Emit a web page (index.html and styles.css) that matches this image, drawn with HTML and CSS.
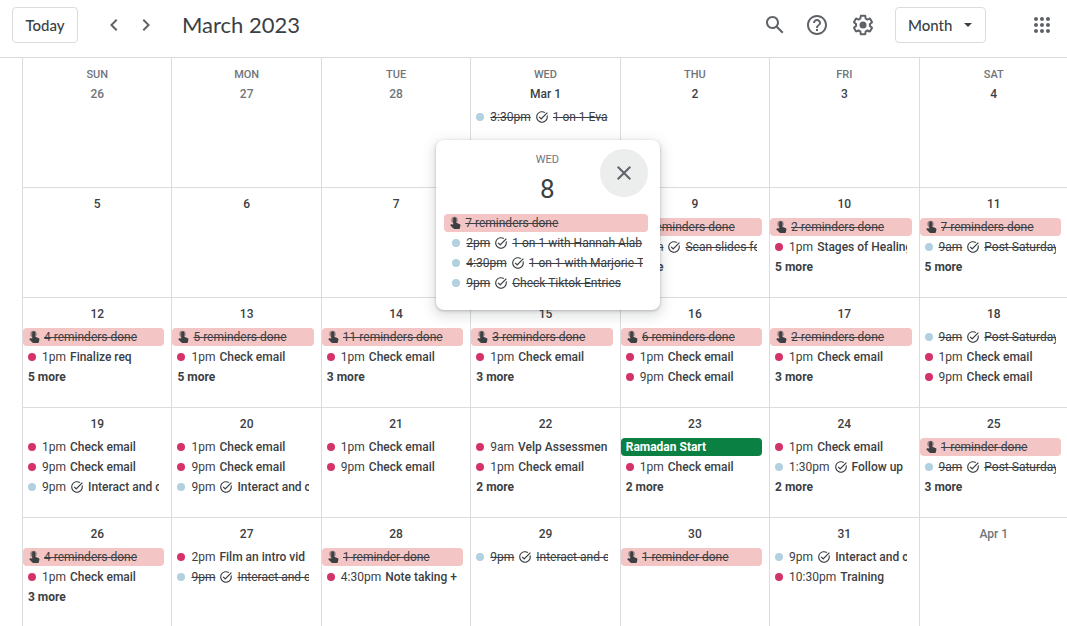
FILE: index.html
```html
<!DOCTYPE html>
<html lang="en">
<head>
    <meta charset="UTF-8">
    <meta name="viewport" content="width=device-width, initial-scale=1.0">
    <title>Calendar - March 2023</title>
    <link rel="stylesheet" href="styles.css">
</head>
<body>

    <svg class="sprite" aria-hidden="true">
        <symbol id="done" viewBox="0 0 24 24">
            <path d="M22 5.18 10.59 16.6l-4.24-4.24 1.41-1.41 2.83 2.83 10-10L22 5.18zm-2.21 5.04c.13.57.21 1.17.21 1.78 0 4.42-3.58 8-8 8s-8-3.58-8-8 3.58-8 8-8c1.58 0 3.04.46 4.28 1.25l1.44-1.44A9.9 9.9 0 0 0 12 2C6.48 2 2 6.48 2 12s4.48 10 10 10 10-4.48 10-10c0-1.19-.22-2.33-.6-3.39l-1.61 1.61z"/>
        </symbol>
        <symbol id="touch" viewBox="0 0 16 16">
            <circle cx="7.5" cy="5" r="3.2" opacity=".5"/>
            <path d="M6.2 3.8a1.5 1.5 0 0 1 3 0v4l3.2 1.1c.8.3 1.1.8 1 1.6l-.5 2.5c-.1.7-.6 1-1.2 1H7.400c-.4 0-.7-.1-1-.4L3.200 10.200l.7-.8c.2-.2.5-.3.8-.2l1.500.4z"/>
        </symbol>
    </svg>

    <header class="toolbar">
        <button class="today">Today</button>
        <button class="arrow" aria-label="Previous month">
            <svg class="icon" viewBox="0 0 24 24"><path d="M15.41 7.41 14 6l-6 6 6 6 1.41-1.41L10.83 12z"/></svg>
        </button>
        <button class="arrow next" aria-label="Next month">
            <svg class="icon" viewBox="0 0 24 24"><path d="M10 6 8.59 7.41 13.17 12l-4.58 4.59L10 18l6-6z"/></svg>
        </button>
        <h1 class="title">March 2023</h1>

        <div class="tools">
            <button class="tool" aria-label="Search">
                <svg class="icon" viewBox="0 0 24 24"><path d="M20.49 19l-5.73-5.73C15.53 12.2 16 10.91 16 9.5 16 5.91 13.09 3 9.5 3S3 5.91 3 9.5 5.91 16 9.5 16c1.41 0 2.7-.47 3.77-1.24L19 20.49 20.49 19zM5 9.5C5 7.01 7.01 5 9.5 5S14 7.01 14 9.5 11.99 14 9.5 14 5 11.99 5 9.5z"/></svg>
            </button>
            <button class="tool" aria-label="Support">
                <svg class="icon" viewBox="0 0 24 24"><path d="M11 18h2v-2h-2v2zm1-16C6.48 2 2 6.48 2 12s4.48 10 10 10 10-4.48 10-10S17.52 2 12 2zm0 18c-4.41 0-8-3.59-8-8s3.59-8 8-8 8 3.59 8 8-3.59 8-8 8zm0-14c-2.21 0-4 1.79-4 4h2c0-1.1.9-2 2-2s2 .9 2 2c0 2-3 1.75-3 5h2c0-2.25 3-2.5 3-5 0-2.21-1.79-4-4-4z"/></svg>
            </button>
            <button class="tool settings" aria-label="Settings">
                <svg class="icon" viewBox="0 0 24 24"><path d="M13.85 22.25h-3.7c-.74 0-1.36-.54-1.45-1.27l-.27-1.89c-.27-.14-.53-.29-.79-.46l-1.8.72c-.7.26-1.47-.03-1.81-.65L2.2 15.53c-.35-.66-.2-1.44.36-1.88l1.53-1.19c-.01-.15-.02-.3-.02-.46 0-.15.01-.31.02-.46l-1.52-1.19c-.59-.45-.74-1.26-.37-1.88l1.85-3.19c.34-.62 1.11-.9 1.79-.63l1.81.73c.26-.17.52-.32.78-.46l.27-1.91c.09-.7.71-1.25 1.44-1.25h3.7c.74 0 1.36.54 1.45 1.27l.27 1.89c.27.14.53.29.79.46l1.8-.72c.71-.26 1.48.03 1.82.65l1.84 3.18c.36.66.2 1.44-.36 1.88l-1.52 1.19c.01.15.02.3.02.46s-.01.31-.02.46l1.52 1.19c.56.45.72 1.23.37 1.86l-1.86 3.22c-.34.62-1.11.9-1.8.63l-1.8-.72c-.26.17-.52.32-.78.46l-.27 1.91c-.1.68-.72 1.22-1.46 1.22zm-3.23-2h2.76l.37-2.55.53-.22c.44-.18.88-.44 1.34-.78l.45-.34 2.38.96 1.38-2.4-2.03-1.58.07-.56c.03-.26.06-.51.06-.78s-.03-.53-.06-.78l-.07-.56 2.03-1.58-1.39-2.4-2.39.96-.45-.35c-.42-.32-.87-.58-1.33-.77l-.52-.22-.37-2.55h-2.76l-.37 2.55-.53.21c-.44.19-.88.44-1.34.79l-.45.33-2.38-.95-1.39 2.39 2.03 1.58-.07.56a7 7 0 0 0-.06.79c0 .26.02.53.06.78l.07.56-2.03 1.58 1.38 2.4 2.39-.96.45.35c.43.33.86.58 1.33.77l.53.22.38 2.55z"/><circle cx="12" cy="12" r="3.5"/></svg>
            </button>
            <label class="view">
                <select class="view-select" aria-label="View">
                    <option>Day</option>
                    <option>Week</option>
                    <option selected>Month</option>
                    <option>Year</option>
                </select>
                <svg class="view-arrow" viewBox="0 0 8 4"><path d="M0 0h8L4 4z"/></svg>
            </label>
            <button class="tool" aria-label="Apps">
                <svg class="icon" viewBox="0 0 24 24"><path d="M6 8c1.1 0 2-.9 2-2s-.9-2-2-2-2 .9-2 2 .9 2 2 2zm6 12c1.1 0 2-.9 2-2s-.9-2-2-2-2 .9-2 2 .9 2 2 2zm-6 0c1.1 0 2-.9 2-2s-.9-2-2-2-2 .9-2 2 .9 2 2 2zm0-6c1.1 0 2-.9 2-2s-.9-2-2-2-2 .9-2 2 .9 2 2 2zm6 0c1.1 0 2-.9 2-2s-.9-2-2-2-2 .9-2 2 .9 2 2 2zm4-8c0 1.1.9 2 2 2s2-.9 2-2-.9-2-2-2-2 .9-2 2zm-4 2c1.1 0 2-.9 2-2s-.9-2-2-2-2 .9-2 2 .9 2 2 2zm6 6c1.1 0 2-.9 2-2s-.9-2-2-2-2 .9-2 2 .9 2 2 2zm0 6c1.1 0 2-.9 2-2s-.9-2-2-2-2 .9-2 2 .9 2 2 2z"/></svg>
            </button>
        </div>
    </header>

    <main class="calendar">
        <table class="month">
            <thead>
                <tr>
                    <th>SUN</th>
                    <th>MON</th>
                    <th>TUE</th>
                    <th>WED</th>
                    <th>THU</th>
                    <th>FRI</th>
                    <th>SAT</th>
                </tr>
            </thead>
            <tbody>
                <tr class="first-week">
                    <td><div class="date other">26</div></td>
                    <td><div class="date other">27</div></td>
                    <td><div class="date other">28</div></td>
                    <td>
                        <div class="date">Mar 1</div>
                        <button class="event struck"><span class="dot blue"></span><span class="time">3:30pm</span><svg class="check"><use href="#done"/></svg><span class="name">1 on 1 Eva</span></button>
                    </td>
                    <td><div class="date">2</div></td>
                    <td><div class="date">3</div></td>
                    <td><div class="date">4</div></td>
                </tr>
                <tr>
                    <td><div class="date">5</div></td>
                    <td><div class="date">6</div></td>
                    <td><div class="date">7</div></td>
                    <td>
                        <div class="popup" role="dialog" aria-label="Wednesday, March 8">
                            <button class="close" aria-label="Close">
                                <svg class="icon" viewBox="0 0 24 24"><path d="M19 6.41 17.59 5 12 10.59 6.41 5 5 6.41 10.59 12 5 17.59 6.41 19 12 13.41 17.59 19 19 17.59 13.41 12z"/></svg>
                            </button>
                            <div class="popup-day">WED</div>
                            <div class="popup-date">8</div>
                            <button class="event reminder"><svg class="touch"><use href="#touch"/></svg><span class="name">7 reminders done</span></button>
                            <button class="event struck"><span class="dot blue"></span><span class="time">2pm</span><svg class="check"><use href="#done"/></svg><span class="name">1 on 1 with Hannah Alab</span></button>
                            <button class="event struck"><span class="dot blue"></span><span class="time">4:30pm</span><svg class="check"><use href="#done"/></svg><span class="name">1 on 1 with Marjorie T</span></button>
                            <button class="event struck"><span class="dot blue"></span><span class="time">9pm</span><svg class="check"><use href="#done"/></svg><span class="name">Check Tiktok Entries</span></button>
                        </div>
                    </td>
                    <td>
                        <div class="date">9</div>
                        <button class="event reminder"><svg class="touch"><use href="#touch"/></svg><span class="name">4 reminders done</span></button>
                        <button class="event struck"><span class="dot blue"></span><span class="time">9am</span><svg class="check"><use href="#done"/></svg><span class="name">Scan slides for</span></button>
                        <button class="event more">4 more</button>
                    </td>
                    <td>
                        <div class="date">10</div>
                        <button class="event reminder"><svg class="touch"><use href="#touch"/></svg><span class="name">2 reminders done</span></button>
                        <button class="event"><span class="dot pink"></span><span class="time">1pm</span><span class="name">Stages of Healing</span></button>
                        <button class="event more">5 more</button>
                    </td>
                    <td>
                        <div class="date">11</div>
                        <button class="event reminder"><svg class="touch"><use href="#touch"/></svg><span class="name">7 reminders done</span></button>
                        <button class="event struck"><span class="dot blue"></span><span class="time">9am</span><svg class="check"><use href="#done"/></svg><span class="name">Post Saturday</span></button>
                        <button class="event more">5 more</button>
                    </td>
                </tr>
                <tr>
                    <td>
                        <div class="date">12</div>
                        <button class="event reminder"><svg class="touch"><use href="#touch"/></svg><span class="name">4 reminders done</span></button>
                        <button class="event"><span class="dot pink"></span><span class="time">1pm</span><span class="name">Finalize req</span></button>
                        <button class="event more">5 more</button>
                    </td>
                    <td>
                        <div class="date">13</div>
                        <button class="event reminder"><svg class="touch"><use href="#touch"/></svg><span class="name">5 reminders done</span></button>
                        <button class="event"><span class="dot pink"></span><span class="time">1pm</span><span class="name">Check email</span></button>
                        <button class="event more">5 more</button>
                    </td>
                    <td>
                        <div class="date">14</div>
                        <button class="event reminder"><svg class="touch"><use href="#touch"/></svg><span class="name">11 reminders done</span></button>
                        <button class="event"><span class="dot pink"></span><span class="time">1pm</span><span class="name">Check email</span></button>
                        <button class="event more">3 more</button>
                    </td>
                    <td>
                        <div class="date">15</div>
                        <button class="event reminder"><svg class="touch"><use href="#touch"/></svg><span class="name">3 reminders done</span></button>
                        <button class="event"><span class="dot pink"></span><span class="time">1pm</span><span class="name">Check email</span></button>
                        <button class="event more">3 more</button>
                    </td>
                    <td>
                        <div class="date">16</div>
                        <button class="event reminder"><svg class="touch"><use href="#touch"/></svg><span class="name">6 reminders done</span></button>
                        <button class="event"><span class="dot pink"></span><span class="time">1pm</span><span class="name">Check email</span></button>
                        <button class="event"><span class="dot pink"></span><span class="time">9pm</span><span class="name">Check email</span></button>
                    </td>
                    <td>
                        <div class="date">17</div>
                        <button class="event reminder"><svg class="touch"><use href="#touch"/></svg><span class="name">2 reminders done</span></button>
                        <button class="event"><span class="dot pink"></span><span class="time">1pm</span><span class="name">Check email</span></button>
                        <button class="event more">3 more</button>
                    </td>
                    <td>
                        <div class="date">18</div>
                        <button class="event struck"><span class="dot blue"></span><span class="time">9am</span><svg class="check"><use href="#done"/></svg><span class="name">Post Saturday</span></button>
                        <button class="event"><span class="dot pink"></span><span class="time">1pm</span><span class="name">Check email</span></button>
                        <button class="event"><span class="dot pink"></span><span class="time">9pm</span><span class="name">Check email</span></button>
                    </td>
                </tr>
                <tr>
                    <td>
                        <div class="date">19</div>
                        <button class="event"><span class="dot pink"></span><span class="time">1pm</span><span class="name">Check email</span></button>
                        <button class="event"><span class="dot pink"></span><span class="time">9pm</span><span class="name">Check email</span></button>
                        <button class="event"><span class="dot blue"></span><span class="time">9pm</span><svg class="check"><use href="#done"/></svg><span class="name">Interact and co</span></button>
                    </td>
                    <td>
                        <div class="date">20</div>
                        <button class="event"><span class="dot pink"></span><span class="time">1pm</span><span class="name">Check email</span></button>
                        <button class="event"><span class="dot pink"></span><span class="time">9pm</span><span class="name">Check email</span></button>
                        <button class="event"><span class="dot blue"></span><span class="time">9pm</span><svg class="check"><use href="#done"/></svg><span class="name">Interact and co</span></button>
                    </td>
                    <td>
                        <div class="date">21</div>
                        <button class="event"><span class="dot pink"></span><span class="time">1pm</span><span class="name">Check email</span></button>
                        <button class="event"><span class="dot pink"></span><span class="time">9pm</span><span class="name">Check email</span></button>
                    </td>
                    <td>
                        <div class="date">22</div>
                        <button class="event"><span class="dot pink"></span><span class="time">9am</span><span class="name">Velp Assessmen</span></button>
                        <button class="event"><span class="dot pink"></span><span class="time">1pm</span><span class="name">Check email</span></button>
                        <button class="event more">2 more</button>
                    </td>
                    <td>
                        <div class="date">23</div>
                        <button class="event holiday">Ramadan Start</button>
                        <button class="event"><span class="dot pink"></span><span class="time">1pm</span><span class="name">Check email</span></button>
                        <button class="event more">2 more</button>
                    </td>
                    <td>
                        <div class="date">24</div>
                        <button class="event"><span class="dot pink"></span><span class="time">1pm</span><span class="name">Check email</span></button>
                        <button class="event"><span class="dot blue"></span><span class="time">1:30pm</span><svg class="check"><use href="#done"/></svg><span class="name">Follow up</span></button>
                        <button class="event more">2 more</button>
                    </td>
                    <td>
                        <div class="date">25</div>
                        <button class="event reminder"><svg class="touch"><use href="#touch"/></svg><span class="name">1 reminder done</span></button>
                        <button class="event struck"><span class="dot blue"></span><span class="time">9am</span><svg class="check"><use href="#done"/></svg><span class="name">Post Saturday</span></button>
                        <button class="event more">3 more</button>
                    </td>
                </tr>
                <tr class="last-week">
                    <td>
                        <div class="date">26</div>
                        <button class="event reminder"><svg class="touch"><use href="#touch"/></svg><span class="name">4 reminders done</span></button>
                        <button class="event"><span class="dot pink"></span><span class="time">1pm</span><span class="name">Check email</span></button>
                        <button class="event more">3 more</button>
                    </td>
                    <td>
                        <div class="date">27</div>
                        <button class="event"><span class="dot pink"></span><span class="time">2pm</span><span class="name">Film an intro vid</span></button>
                        <button class="event struck"><span class="dot blue"></span><span class="time">9pm</span><svg class="check"><use href="#done"/></svg><span class="name">Interact and co</span></button>
                    </td>
                    <td>
                        <div class="date">28</div>
                        <button class="event reminder"><svg class="touch"><use href="#touch"/></svg><span class="name">1 reminder done</span></button>
                        <button class="event"><span class="dot pink"></span><span class="time">4:30pm</span><span class="name">Note taking +</span></button>
                    </td>
                    <td>
                        <div class="date">29</div>
                        <button class="event struck"><span class="dot blue"></span><span class="time">9pm</span><svg class="check"><use href="#done"/></svg><span class="name">Interact and co</span></button>
                    </td>
                    <td>
                        <div class="date">30</div>
                        <button class="event reminder"><svg class="touch"><use href="#touch"/></svg><span class="name">1 reminder done</span></button>
                    </td>
                    <td>
                        <div class="date">31</div>
                        <button class="event"><span class="dot blue"></span><span class="time">9pm</span><svg class="check"><use href="#done"/></svg><span class="name">Interact and co</span></button>
                        <button class="event"><span class="dot pink"></span><span class="time">10:30pm</span><span class="name">Training</span></button>
                    </td>
                    <td><div class="date other">Apr 1</div></td>
                </tr>
            </tbody>
        </table>
    </main>

</body>
</html>
```
FILE: styles.css
```css
* {
    box-sizing: border-box;
}

body {
    margin: 0;
    font-family: Roboto, sans-serif;
    font-size: 12px;
    color: #3c4043;
    background-color: #fff;
}

button,
select {
    font-family: inherit;
    color: inherit;
    border: none;
    background: none;
    padding: 0;
    cursor: pointer;
}

.sprite {
    display: none;
}

svg {
    display: block;
    flex: none;
    fill: currentColor;
}

/* Toolbar */

.toolbar {
    display: flex;
    align-items: center;
    padding: 7px 5px 14px 12px;
}

.today,
.view-select {
    height: 36px;
    padding: 0 12px;
    border: 1px solid #dadce0;
    border-radius: 4px;
    font-family: Lato, sans-serif;
    font-size: 15px;
    font-weight: 500;
}

.today {
    min-width: 66px;
    margin-right: 20px;
}

.arrow {
    display: flex;
    justify-content: center;
    width: 32px;
    color: #5f6368;
}

.icon {
    width: 24px;
    height: 24px;
}

.title {
    margin: 0 0 0 20px;
    font-family: Lato, sans-serif;
    font-size: 22px;
    font-weight: 400;
    line-height: 28px;
}

.tools {
    display: flex;
    align-items: center;
    gap: 2px;
    margin-left: auto;
}

.tool {
    display: flex;
    align-items: center;
    justify-content: center;
    width: 40px;
    height: 36px;
    color: #5f6368;
}

.settings {
    margin-left: 4px;
}

.view {
    position: relative;
    margin: 0 34px 0 10px;
}

.view-select {
    display: block;
    width: 91px;
    appearance: none;
}

.view-arrow {
    position: absolute;
    top: 16px;
    right: 14px;
    width: 8px;
    height: 4px;
    pointer-events: none;
}

/* Month grid */

.calendar {
    padding-left: 22px;
    border-top: 1px solid #dadce0;
    overflow: hidden;
}

.month {
    width: calc(100% + 1px);
    table-layout: fixed;
    border-spacing: 0;
}

th {
    padding: 9px 0 0;
    border-left: 1px solid #dadce0;
    font-size: 11px;
    font-weight: 500;
    line-height: 15px;
    color: #70757a;
}

td {
    position: relative;
    height: 110px;
    padding: 0;
    vertical-align: top;
    border-top: 1px solid #dadce0;
    border-left: 1px solid #dadce0;
}

.first-week td {
    height: 105px;
    border-top: none;
}

.last-week td {
    height: 109px;
}

.date {
    padding: 5px 0 3px;
    font-weight: 500;
    line-height: 22px;
    text-align: center;
}

.first-week .date {
    padding-top: 1px;
}

.other {
    color: #70757a;
}

/* Events */

.event {
    display: flex;
    align-items: center;
    width: calc(100% - 7px);
    height: 18px;
    margin-bottom: 2px;
    padding: 0 5px;
    border-radius: 4px;
    font-size: 12px;
    font-weight: 500;
    line-height: 18px;
    white-space: nowrap;
    overflow: hidden;
}

.dot {
    flex: none;
    width: 8px;
    height: 8px;
    margin-right: 6px;
    border-radius: 50%;
}

.pink {
    background-color: #d5326a;
}

.blue {
    background-color: #b1d0e0;
}

.time {
    margin-right: 4px;
    font-weight: 400;
}

.check {
    width: 14px;
    height: 14px;
    margin-right: 4px;
}

.name {
    flex: 1;
    min-width: 0;
    text-align: left;
    overflow: hidden;
}

.struck .time,
.struck .name,
.reminder .name {
    font-weight: 400;
    text-decoration: line-through;
}

.reminder {
    padding-left: 3px;
    background-color: #f4c5c5;
}

.touch {
    width: 16px;
    height: 16px;
    margin-right: 2px;
}

.holiday {
    background-color: #0b8043;
    color: #fff;
    font-weight: 700;
}

.more {
    font-weight: 700;
}

/* Day popup */

.popup {
    position: absolute;
    z-index: 1;
    top: -48px;
    left: -35px;
    width: 224px;
    padding: 11px 12px 16px 8px;
    border-radius: 8px;
    background-color: #fff;
    box-shadow: 0 1px 3px rgba(60, 64, 67, 0.3), 0 4px 12px 3px rgba(60, 64, 67, 0.15);
}

.popup .event {
    width: 100%;
    padding-left: 8px;
}

.popup .reminder {
    padding-left: 3px;
}

.popup-day,
.popup-date {
    padding-left: 2px;
    text-align: center;
}

.popup-day {
    font-size: 11px;
    line-height: 18px;
    color: #70757a;
}

.popup-date {
    margin-bottom: 5px;
    font-size: 26px;
    line-height: 40px;
}

.close {
    position: absolute;
    top: 9px;
    right: 12px;
    display: flex;
    align-items: center;
    justify-content: center;
    width: 48px;
    height: 48px;
    border-radius: 50%;
    background-color: #eceded;
    color: #5f6368;
}
```
